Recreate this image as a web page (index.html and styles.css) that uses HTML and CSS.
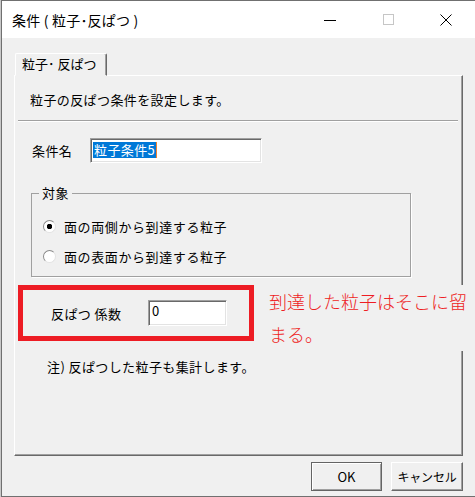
FILE: index.html
```html
<!DOCTYPE html>
<html lang="ja">
<head>
    <meta charset="UTF-8">
    <title>条件 ( 粒子･反ぱつ )</title>
    <link rel="stylesheet" href="styles.css">
</head>
<body>
    <div class="window">
        <div class="titlebar">
            <span class="title">条件 ( 粒子･反ぱつ )</span>
            <div class="controls">
                <span class="ctl">
                    <svg width="12" height="12" viewBox="0 0 12 12"><path d="M0 6.5H12" stroke="#000" stroke-width="1"/></svg>
                </span>
                <span class="ctl">
                    <svg width="11" height="11" viewBox="0 0 11 11"><rect x="0.5" y="0.5" width="10" height="10" fill="none" stroke="#c6c6c6"/></svg>
                </span>
                <span class="ctl">
                    <svg width="12" height="12" viewBox="0 0 12 12"><path d="M0.5 0.5L11.5 11.5M11.5 0.5L0.5 11.5" stroke="#000" stroke-width="1"/></svg>
                </span>
            </div>
        </div>

        <div class="client">
            <div class="tabs">
                <span class="tab">粒子･ 反ぱつ</span>
            </div>

            <div class="panel">
                <p class="intro">粒子の反ぱつ条件を設定します。</p>
                <div class="sep"></div>

                <div class="name-row">
                    <label class="lbl">条件名</label>
                    <div class="field name-field"><span class="sel">粒子条件5</span></div>
                </div>

                <fieldset class="group">
                    <legend>対象</legend>
                    <label class="radio-row"><span class="radio checked"></span>面の両側から到達する粒子</label>
                    <label class="radio-row"><span class="radio"></span>面の表面から到達する粒子</label>
                </fieldset>

                <div class="coef-row">
                    <div class="red-box">
                        <span class="coef-label">反ぱつ 係数</span>
                        <div class="field coef-field">0</div>
                    </div>
                    <p class="callout">到達した粒子はそこに留<br>まる。</p>
                </div>

                <p class="note">注) 反ぱつした粒子も集計します。</p>
            </div>

            <div class="buttons">
                <button type="button" class="btn default">OK</button>
                <button type="button" class="btn">キャンセル</button>
            </div>
        </div>
    </div>
</body>
</html>
```

FILE: styles.css
```css
* {
    box-sizing: border-box;
}
body {
    margin: 0;
    background: #c8c8c8;
    font-family: "Noto Sans CJK JP", "Noto Sans", sans-serif;
    font-size: 13px;
    letter-spacing: 0.4px;
    color: #000;
}
.window {
    width: 474px;
    height: 497px;
    margin-left: 1px;
    border: 1px solid #707070;
    border-right: none;
    background: #f0f0f0;
    display: flex;
    flex-direction: column;
    overflow: hidden;
}
.titlebar {
    height: 37px;
    flex-shrink: 0;
    background: #fff;
    display: flex;
    align-items: center;
    justify-content: space-between;
    padding-left: 10px;
}
.title {
    font-size: 14px;
    letter-spacing: 0.2px;
    line-height: 20px;
    margin-top: 1px;
}
.controls {
    display: flex;
    height: 100%;
}
.ctl {
    width: 58px;
    display: flex;
    align-items: center;
    justify-content: center;
}
.ctl svg {
    display: block;
}
.client {
    flex: 1;
    padding: 15px 12px 0 12px;
}
/* Tab */
.tabs {
    display: flex;
    padding-left: 1px;
}
.tab {
    position: relative;
    z-index: 1;
    width: 92px;
    height: 23px;
    margin-bottom: -1px;
    padding-left: 6px;
    line-height: 20px;
    letter-spacing: 0;
    background: #f0f0f0;
    border: 1px solid;
    border-color: #fff #696969 #f0f0f0 #fff;
    border-radius: 2px 2px 0 0;
    box-shadow: inset -1px 0 0 #a0a0a0;
}
.panel {
    height: 381px;
    border: 1px solid;
    border-color: #fff #696969 #696969 #fff;
    box-shadow: inset -1px -1px 0 #a0a0a0;
}
.intro {
    margin: 14px 0 0 15px;
    line-height: 20px;
}
.sep {
    height: 2px;
    margin: 10px 4px 0 3px;
    border-top: 1px solid #a0a0a0;
    border-bottom: 1px solid #fff;
}
.name-row {
    display: flex;
    align-items: center;
    margin: 16px 0 0 17px;
}
.lbl {
    width: 58px;
}
.field {
    height: 25px;
    background: #fff;
    border: 1px solid;
    border-color: #a0a0a0 #fff #fff #a0a0a0;
    box-shadow: inset 1px 1px 0 #696969, inset -1px -1px 0 #e3e3e3;
}
.name-field {
    width: 172px;
    padding: 1px 0 0 2px;
}
.sel {
    display: inline-block;
    height: 16px;
    line-height: 16px;
    padding: 0 1px;
    background: #0078d7;
    color: #fff;
    border-right: 1px solid #f08030;
}
/* Group box */
.group {
    width: 380px;
    margin: 22px 0 0 16px;
    padding: 0 0 5px 0;
    border: 1px solid #a0a0a0;
    box-shadow: 1px 1px 0 #fff;
}
.group legend {
    margin-left: 7px;
    padding: 0 3px;
    line-height: 16px;
}
.radio-row {
    display: flex;
    align-items: center;
    gap: 8px;
    height: 30px;
    padding-left: 11px;
    letter-spacing: 0.6px;
}
.radio-row:first-of-type {
    margin-top: 10px;
}
.radio {
    width: 13px;
    height: 13px;
    border-radius: 50%;
    border: 1px solid;
    border-color: #8a8a8a #e3e3e3 #e3e3e3 #8a8a8a;
    background: #fff;
}
.radio.checked {
    background: radial-gradient(circle, #000 0 2.5px, #fff 3px);
}
/* Coefficient row */
.coef-row {
    display: flex;
    align-items: flex-start;
    margin: 8px 0 0 3px;
}
.red-box {
    width: 236px;
    height: 56px;
    flex-shrink: 0;
    border: 5px solid #ed1c24;
    display: flex;
    align-items: center;
    padding-left: 28px;
}
.coef-label {
    width: 97px;
}
.coef-field {
    width: 79px;
    height: 26px;
    padding: 0 0 0 3px;
    line-height: 20px;
}
.callout {
    width: 202px;
    flex-shrink: 0;
    margin: 0 0 0 15px;
    font-size: 18px;
    font-weight: 300;
    letter-spacing: 0;
    line-height: 33px;
    color: #ee1d23;
    background: #f0f0f0;
}
.note {
    margin: 6px 0 0 32px;
    line-height: 20px;
}
/* Buttons */
.buttons {
    display: flex;
    justify-content: flex-end;
    gap: 9px;
    margin-top: 6px;
}
.btn {
    height: 29px;
    width: 72px;
    padding: 0;
    font-family: inherit;
    font-size: 13px;
    background: #f0f0f0;
    border: 1px solid;
    border-color: #fff #696969 #696969 #fff;
    box-shadow: inset -1px -1px 0 #a0a0a0;
}
.btn.default {
    width: 71px;
    border-color: #646464;
    box-shadow: inset 1px 1px 0 #fff, inset -1px -1px 0 #a0a0a0;
}
.btn:last-child {
    font-size: 12px;
    letter-spacing: -0.2px;
}
```
